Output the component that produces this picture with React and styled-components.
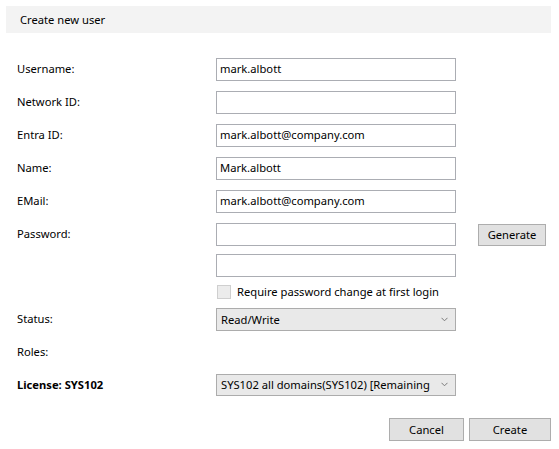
import React from 'react';
import styled, { createGlobalStyle } from 'styled-components';

const GlobalStyle = createGlobalStyle`
	html, body {
		margin: 0;
		padding: 0;
		background: #fff;
	}
	body {
		font-family: 'Segoe UI', 'Noto Sans', 'Open Sans', sans-serif;
		font-size: 11.2px;
		color: #000;
	}
`;

const Window = styled.div`
	width: 559px;
	height: 449px;
	padding: 6px 8px 0 6px;
	box-sizing: border-box;
`;

const Header = styled.div`
	height: 27px;
	background: #f3f3f3;
	display: flex;
	align-items: center;
	padding-left: 14px;
`;

const Form = styled.div`
	display: flex;
	flex-direction: column;
	padding: 25px 0 0 11px;
`;

const Row = styled.div`
	display: grid;
	grid-template-columns: 199px 240px 1fr;
	align-items: start;
	margin-bottom: ${(p) => p.$gap ?? 10}px;
`;

const Label = styled.div`
	line-height: 22px;
	height: ${(p) => p.$h ?? 23}px;
	font-weight: ${(p) => (p.$bold ? 700 : 400)};
`;

const TextBox = styled.input`
	box-sizing: border-box;
	height: 23px;
	width: 240px;
	margin: 0;
	padding: 0 3px 2px;
	border: 1px solid #abadb3;
	font: inherit;
	color: #000;
	outline: none;
	background: #fff;
`;

const Select = styled.div`
	box-sizing: border-box;
	height: ${(p) => p.$h || 23}px;
	width: 240px;
	border: 1px solid #acacac;
	background: #e9e9e9;
	display: flex;
	align-items: center;
	justify-content: space-between;
	padding: 0 7px 1px 4px;
	white-space: nowrap;
	overflow: hidden;

	span {
		overflow: hidden;
	}
	svg {
		flex-shrink: 0;
		margin-left: 6px;
	}
`;

const Button = styled.button`
	box-sizing: border-box;
	height: ${(p) => p.$h || 23}px;
	width: ${(p) => p.$w}px;
	margin: 0;
	padding: 0 0 1px;
	border: 1px solid #adadad;
	background: #e1e1e1;
	font: inherit;
	color: #000;
`;

const Side = styled.div`
	padding-left: 22px;
	padding-top: 1px;
`;

const CheckRow = styled.label`
	display: flex;
	align-items: center;
	gap: 6px;
	height: 15px;
	padding-left: 1px;
`;

const Box = styled.span`
	box-sizing: border-box;
	width: 14px;
	height: 14px;
	border: 1px solid #cfcfcf;
	background: #ececec;
`;

const Footer = styled.div`
	display: flex;
	justify-content: flex-end;
	gap: 5px;
	margin-top: 21px;
`;

const Chevron = () => (
	<svg width='7' height='5' viewBox='0 0 7 5'>
		<path d='M0.5 0.8 L3.5 3.8 L6.5 0.8' fill='none' stroke='#7a7a7a' strokeWidth='1' />
	</svg>
);

const fields = [
	{ label: 'Username:', value: 'mark.albott' },
	{ label: 'Network ID:', value: '' },
	{ label: 'Entra ID:', value: 'mark.albott@company.com' },
	{ label: 'Name:', value: 'Mark.albott' },
	{ label: 'EMail:', value: 'mark.albott@company.com' },
];

const App = () => {
	return (
		<>
			<GlobalStyle />
			<Window>
				<Header>Create new user</Header>
				<Form>
					{fields.map((f) => (
						<Row key={f.label}>
							<Label>{f.label}</Label>
							<TextBox defaultValue={f.value} />
						</Row>
					))}
					<Row $gap={8}>
						<Label>Password:</Label>
						<TextBox type='text' defaultValue='' />
						<Side>
							<Button $w={68} $h={22}>Generate</Button>
						</Side>
					</Row>
					<Row $gap={7}>
						<Label />
						<TextBox defaultValue='' />
					</Row>
					<Row $gap={9}>
						<Label $h={15} />
						<CheckRow>
							<Box />
							Require password change at first login
						</CheckRow>
					</Row>
					<Row $gap={10}>
						<Label>Status:</Label>
						<Select>
							<span>Read/Write</span>
							<Chevron />
						</Select>
					</Row>
					<Row $gap={10}>
						<Label>Roles:</Label>
					</Row>
					<Row $gap={0}>
						<Label $bold>License: SYS102</Label>
						<Select $h={22}>
							<span>SYS102 all domains(SYS102) [Remaining</span>
							<Chevron />
						</Select>
					</Row>
					<Footer>
						<Button $w={75}>Cancel</Button>
						<Button $w={82}>Create</Button>
					</Footer>
				</Form>
			</Window>
		</>
	);
};

export default App;
